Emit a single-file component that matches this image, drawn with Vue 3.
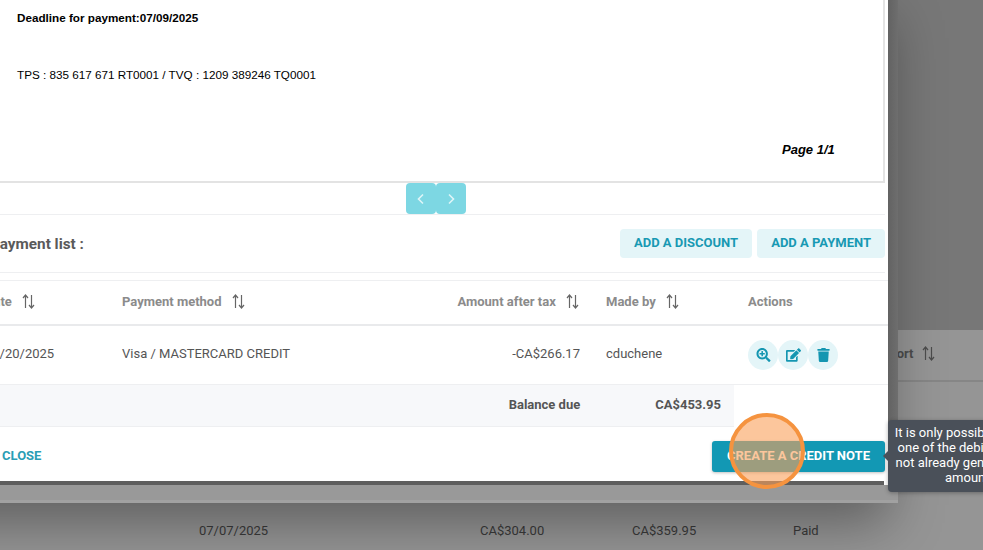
<script setup>
const backRow = ['07/07/2025', 'CA$304.00', 'CA$359.95', 'Paid']
const tooltipLines = ['It is only possible to issue', 'one of the debits if it has', 'not already generated the', 'amount.']
</script>

<template>
  <div class="page">
    <!-- table behind the modal -->
    <div class="back">
      <div class="back-head">
        <span class="back-title">Report</span>
        <svg class="sort" viewBox="0 0 13 15"><path d="M3.5 14V1.5M1 4l2.5-3L6 4M9.5 1v12.5M7 11l2.5 3L12 11" /></svg>
      </div>
      <div class="back-row">
        <span v-for="cell in backRow" :key="cell" class="back-cell">{{ cell }}</span>
      </div>
    </div>

    <div class="shell">
      <div class="modal">
        <div class="invoice">
          <div class="deadline">Deadline for payment:07/09/2025</div>
          <div class="tax">TPS : 835 617 671 RT0001 / TVQ : 1209 389246 TQ0001</div>
          <div class="page-no">Page 1/1</div>
        </div>

        <div class="pager">
          <button class="pager-btn">
            <svg viewBox="0 0 10 12"><path d="M7 1.5 2.5 6 7 10.5" /></svg>
          </button>
          <button class="pager-btn">
            <svg viewBox="0 0 10 12"><path d="M3 1.5 7.5 6 3 10.5" /></svg>
          </button>
        </div>

        <div class="list-head">
          <h3>Payment list :</h3>
          <div class="list-btns">
            <button class="soft-btn">ADD A DISCOUNT</button>
            <button class="soft-btn">ADD A PAYMENT</button>
          </div>
        </div>

        <div class="table">
          <div class="row row-head">
            <div class="cell">Date <svg class="sort" viewBox="0 0 13 15"><path d="M3.5 14V1.5M1 4l2.5-3L6 4M9.5 1v12.5M7 11l2.5 3L12 11" /></svg></div>
            <div class="cell">Payment method <svg class="sort" viewBox="0 0 13 15"><path d="M3.5 14V1.5M1 4l2.5-3L6 4M9.5 1v12.5M7 11l2.5 3L12 11" /></svg></div>
            <div class="cell right">Amount after tax <svg class="sort" viewBox="0 0 13 15"><path d="M3.5 14V1.5M1 4l2.5-3L6 4M9.5 1v12.5M7 11l2.5 3L12 11" /></svg></div>
            <div class="cell">Made by <svg class="sort" viewBox="0 0 13 15"><path d="M3.5 14V1.5M1 4l2.5-3L6 4M9.5 1v12.5M7 11l2.5 3L12 11" /></svg></div>
            <div class="cell">Actions</div>
          </div>
          <div class="row row-body">
            <div class="cell">05/20/2025</div>
            <div class="cell">Visa / MASTERCARD CREDIT</div>
            <div class="cell right">-CA$266.17</div>
            <div class="cell">cduchene</div>
            <div class="actions">
              <span class="round">
                <svg viewBox="0 0 512 512"><path d="M304 192v32c0 6.600-5.400 12-12 12h-56v56c0 6.600-5.400 12-12 12h-32c-6.600 0-12-5.400-12-12v-56h-56c-6.600 0-12-5.400-12-12v-32c0-6.600 5.400-12 12-12h56v-56c0-6.600 5.400-12 12-12h32c6.600 0 12 5.400 12 12v56h56c6.600 0 12 5.400 12 12zm201 284.700L476.700 505c-9.400 9.400-24.600 9.400-33.900 0L343 405.300c-4.500-4.500-7-10.600-7-17V372c-35.300 27.600-79.700 44-128 44C93.100 416 0 322.900 0 208S93.100 0 208 0s208 93.100 208 208c0 48.300-16.400 92.700-44 128h16.300c6.400 0 12.500 2.500 17 7l99.700 99.700c9.300 9.400 9.300 24.600 0 34zM344 208c0-75.200-60.800-136-136-136S72 132.800 72 208s60.800 136 136 136 136-60.800 136-136z" /></svg>
              </span>
              <span class="round">
                <svg viewBox="0 0 576 512"><path d="M402.600 83.200l90.200 90.200c3.800 3.800 3.800 10 0 13.800L274.400 405.600l-92.800 10.300c-12.400 1.400-22.900-9.100-21.500-21.500l10.300-92.800L388.800 83.200c3.800-3.800 10-3.800 13.800 0zm162-22.900l-48.800-48.800c-15.200-15.200-39.900-15.200-55.200 0l-35.400 35.400c-3.800 3.800-3.800 10 0 13.800l90.200 90.200c3.800 3.800 10 3.800 13.800 0l35.400-35.400c15.200-15.300 15.200-40 0-55.200zM384 346.200V448H64V128h229.800c3.200 0 6.200-1.300 8.500-3.500l40-40c7.600-7.600 2.200-20.500-8.500-20.500H48C21.500 64 0 85.500 0 112v352c0 26.500 21.500 48 48 48h352c26.500 0 48-21.500 48-48V306.200c0-10.700-12.900-16-20.500-8.500l-40 40c-2.200 2.300-3.500 5.300-3.500 8.500z" /></svg>
              </span>
              <span class="round">
                <svg viewBox="0 0 448 512"><path d="M432 32H312l-9.400-18.700A24 24 0 0 0 281.100 0H166.800a23.720 23.720 0 0 0-21.400 13.300L136 32H16A16 16 0 0 0 0 48v32a16 16 0 0 0 16 16h416a16 16 0 0 0 16-16V48a16 16 0 0 0-16-16zM53.200 467a48 48 0 0 0 47.900 45h245.800a48 48 0 0 0 47.900-45L416 128H32z" /></svg>
              </span>
            </div>
          </div>
          <div class="row-total">
            <div class="total-label">Balance due</div>
            <div class="total-value">CA$453.95</div>
          </div>
        </div>

        <div class="foot">
          <button class="close-btn">CLOSE</button>
          <button class="credit-btn">CREATE A CREDIT NOTE</button>
        </div>
        <div class="foot-bar"></div>
      </div>
      <div class="shell-strip"></div>
    </div>

    <!-- tooltip and click marker lie over everything -->
    <div class="tooltip">
      <div v-for="line in tooltipLines" :key="line">{{ line }}</div>
    </div>
    <div class="marker"></div>
  </div>
</template>

<style>
html, body {
  margin: 0;
  background: #7c7c7c;
}
</style>

<style scoped>
.page {
  position: relative;
  width: 983px;
  height: 550px;
  overflow: hidden;
  background: #787878;
  font-family: Roboto, "Liberation Sans", sans-serif;
}

button {
  border: none;
  font-family: inherit;
  cursor: pointer;
}

.sort {
  width: 13px;
  height: 15px;
  margin-left: 7px;
  vertical-align: -3px;
  fill: none;
  stroke: currentColor;
  stroke-width: 1.2;
}

/* back table */
.back {
  padding-top: 330px;
  height: 220px;
  background: linear-gradient(#777777 330px, #959595 330px);
}

.back-head {
  height: 52px;
  box-sizing: border-box;
  border-bottom: 2px solid #868686;
  display: flex;
  align-items: center;
  padding: 0 0 3px 874px;
  font-size: 13px;
  font-weight: 700;
  color: #4c4c4c;
}

.back-title {
  width: 38px;
  text-align: right;
}

.back-head .sort {
  margin-left: 10px;
}

.back-row {
  margin-top: 141px;
  display: grid;
  padding-left: 199px;
  font-size: 13px;
  color: #3a3a3a;
  grid-template-columns: 281px 152px 161px 100px;
}

/* modal */
.shell {
  position: absolute;
  left: -60px;
  top: 0;
  width: 958px;
  height: 503px;
  background: linear-gradient(90deg, #626262 948px, #6e6e6e 958px);
  box-shadow: -10px 20px 50px rgba(0, 0, 0, 0.36);
}

.shell-strip {
  height: 18px;
  box-sizing: border-box;
  background: #999999;
  border-bottom: 3px solid #a1a1a1;
}

.modal {
  width: 948px;
  height: 485px;
  background: #fff;
  display: flex;
  flex-direction: column;
}

.invoice {
  height: 183px;
  width: 945px;
  box-sizing: border-box;
  border-right: 2px solid #e3e3e3;
  border-bottom: 2px solid #e3e3e3;
  padding: 11px 0 0 77px;
  font-family: "Liberation Sans", Arial, sans-serif;
  font-size: 11.7px;
  color: #000;
  flex: none;
}

.deadline {
  font-weight: 700;
  line-height: 13px;
}

.tax {
  margin-top: 44px;
  line-height: 13px;
}

.page-no {
  margin-top: 61px;
  margin-left: 765px;
  font-size: 13px;
  font-weight: 700;
  font-style: italic;
  line-height: 16px;
}

.pager {
  height: 31px;
  flex: none;
  display: flex;
  justify-content: center;
  padding-left: 44px;
}

.pager-btn {
  width: 30px;
  height: 31px;
  padding: 0;
  background: #7dd7e3;
  border-radius: 4px;
  display: flex;
  align-items: center;
  justify-content: center;
}

.pager-btn svg {
  width: 10px;
  height: 12px;
  fill: none;
  stroke: #dff5f8;
  stroke-width: 1.6;
}

.list-head {
  width: 945px;
  height: 59px;
  flex: none;
  box-sizing: border-box;
  border-top: 1px solid #eeeff1;
  border-bottom: 1px solid #eeeff1;
  display: flex;
  align-items: center;
  justify-content: space-between;
  padding-left: 50px;
}

.list-head h3 {
  margin: 0;
  font-size: 15.3px;
  font-weight: 700;
  color: #5a5a5a;
}

.list-btns {
  display: flex;
  gap: 5px;
}

.soft-btn {
  height: 29px;
  padding: 0 14px 2px;
  background: #e4f5f8;
  border-radius: 4px;
  color: #1899b3;
  font-size: 13px;
  font-weight: 700;
}

.table {
  margin-top: 7px;
  flex: none;
}

.row {
  display: grid;
  grid-template-columns: 137px 300px 184px 142px 1fr;
  width: 948px;
  padding-left: 45px;
  box-sizing: border-box;
  align-items: center;
}

.cell {
  font-size: 13px;
  color: #555;
}

.right {
  text-align: right;
  padding-right: 26px;
}

.row-head {
  height: 46px;
  border-top: 1px solid #eeeff1;
  border-bottom: 2px solid #e9eaec;
}

.row-head .cell {
  font-weight: 700;
  color: #8b8b8b;
  padding-bottom: 2px;
}

.row-head .right {
  padding-right: 27px;
}

.row-head .sort {
  color: #666;
}

.row-body {
  height: 59px;
  border-bottom: 1px solid #eeeff1;
}

.row-body .cell {
  padding-bottom: 4px;
}

.actions {
  display: flex;
}

.round {
  width: 30px;
  height: 30px;
  border-radius: 50%;
  background: #e4f5f8;
  display: flex;
  align-items: center;
  justify-content: center;
}

.round svg {
  height: 14px;
  width: 15px;
  fill: #1596b1;
}

.row-total {
  height: 42px;
  width: 794px;
  box-sizing: border-box;
  display: flex;
  align-items: center;
  background: #f7f8fa;
  border-bottom: 1px solid #eeeff1;
  padding: 0 13px 3px 0;
  justify-content: flex-end;
  font-size: 13px;
  font-weight: 700;
  color: #555;
}

.total-label {
  margin-right: 75px;
}

.foot {
  flex: 1;
  width: 945px;
  display: flex;
  align-items: center;
  justify-content: space-between;
  box-sizing: border-box;
  padding: 4px 0 0 62px;
}

.close-btn {
  background: none;
  padding: 0 0 2px;
  color: #2a9db5;
  font-size: 13px;
  font-weight: 700;
}

.credit-btn {
  width: 173px;
  height: 31px;
  padding: 0 0 2px;
  background: #1298b4;
  border-radius: 3px;
  color: #fff;
  font-size: 13px;
  font-weight: 700;
  box-shadow: 0 1px 3px rgba(0, 0, 0, 0.25);
}

.foot-bar {
  width: 944px;
  height: 4px;
  flex: none;
  background: #5e5e5e;
}

/* overlays */
.tooltip {
  position: absolute;
  left: 888px;
  top: 420px;
  width: 162px;
  height: 72px;
  box-sizing: border-box;
  padding: 5px 0;
  background: #4a5059;
  border-radius: 4px;
  color: #fff;
  font-size: 13px;
  line-height: 15px;
  text-align: center;
  box-shadow: 0 1px 4px rgba(0, 0, 0, 0.3);
}

.tooltip::before {
  content: "";
  position: absolute;
  left: -5px;
  top: 31px;
  border: 5px solid transparent;
  border-left: none;
  border-right-color: #4a5059;
}

.marker {
  position: absolute;
  left: 729px;
  top: 413px;
  width: 76px;
  height: 76px;
  box-sizing: border-box;
  border: 4px solid #f5933f;
  border-radius: 50%;
  background: rgba(250, 160, 90, 0.6);
}
</style>
